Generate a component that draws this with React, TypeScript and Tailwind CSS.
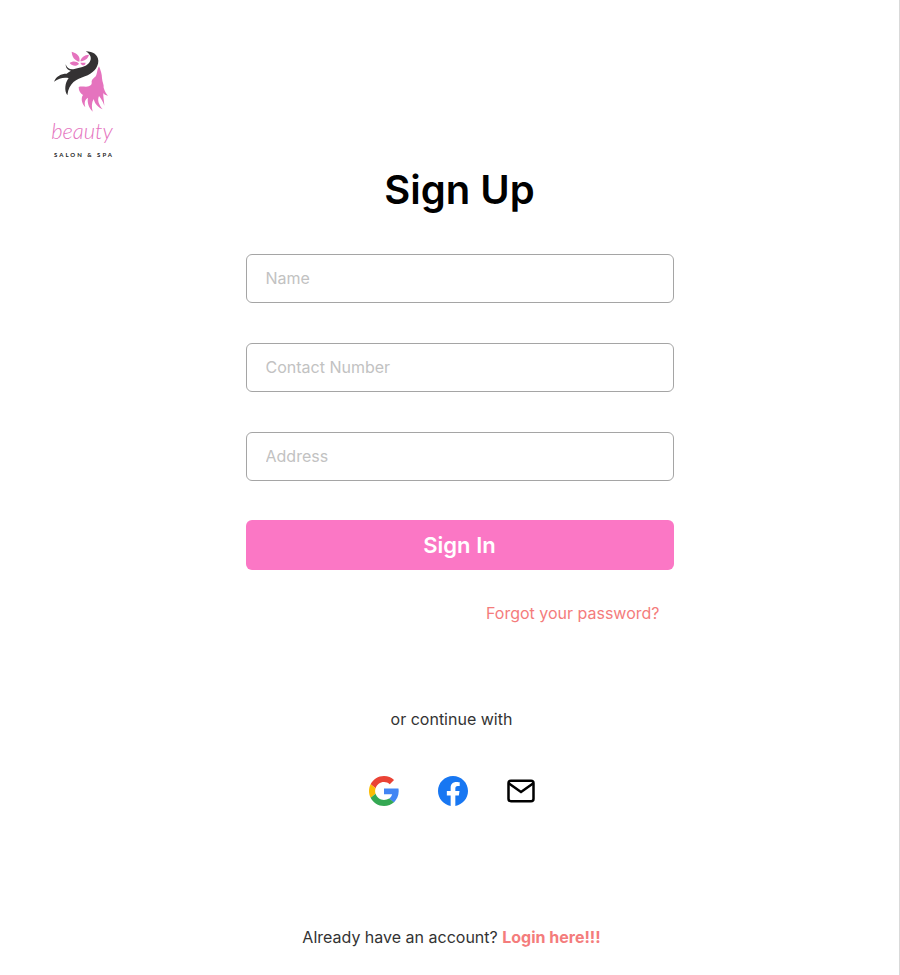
import React from "react";

function Logo() {
  return (
    <div className="flex w-19 flex-col items-center">
      <svg viewBox="0 0 225 210" className="h-[70px] w-[75px]" aria-hidden="true">
        <path
          fill="#343233"
          d="M122 19 C145 19 159 30 160 47 C160 69 143 85 120 94 C94 104 72 112 67 151 C57 136 60 114 71 99 C56 96 42 99 27 110 C34 93 48 86 65 86 C75 77 84 74 98 76 C78 82 62 76 62 58 C66 70 76 75 88 72 C104 68 122 66 132 54 C143 40 136 27 122 19Z"
        />
        <path
          fill="#e573be"
          d="M162 64 C167 76 171 88 171 100 C172 112 177 118 176 128 C179 139 184 147 189 152 C182 151 177 148 175 144 C174 154 177 165 178 182 C174 170 168 160 162 153 C156 166 162 180 173 193 C158 187 149 175 146 162 C140 172 139 185 143 200 C131 187 126 172 129 158 C120 163 117 171 121 187 C110 175 107 160 114 150 C107 146 101 139 101 126 C107 123 115 125 123 125 C136 124 141 120 140 112 C139 104 147 99 152 94 C157 87 155 76 162 64Z"
        />
        <path
          fill="#e573be"
          d="M80 20 C97 25 107 35 103 50 C88 46 81 35 80 20Z M132 29 C129 42 118 48 106 49 C108 37 118 30 132 29Z M74 54 C84 46 96 49 102 56 C95 65 82 64 74 54Z M106 53 L122 53 C120 63 111 64 106 53Z"
        />
      </svg>
      <span className="font-['Lato',sans-serif] text-[22px] leading-8 font-light text-[#e573be] italic">
        beauty
      </span>
      <span className="-mr-1 font-['Lato',sans-serif] text-[6px] leading-4 font-bold tracking-[2px] whitespace-nowrap text-[#222222]">
        SALON &amp; SPA
      </span>
    </div>
  );
}

function Field({ id, label }: { id: string; label: string }) {
  return (
    <input
      id={id}
      name={id}
      type="text"
      aria-label={label}
      placeholder={label}
      className="h-[49px] w-full rounded-md border border-[#a5a5a5] bg-white px-[19px] pb-0.5 text-base text-gray-800 placeholder:text-[#c2c2c2]"
    />
  );
}

function GoogleIcon() {
  return (
    <svg viewBox="0 0 48 48" className="size-[30px]" aria-hidden="true">
      <path fill="#EA4335" d="M24 9.5c3.54 0 6.71 1.22 9.21 3.6l6.85-6.85C35.9 2.38 30.47 0 24 0 14.62 0 6.51 5.38 2.56 13.22l7.98 6.19C12.43 13.72 17.74 9.5 24 9.5z" />
      <path fill="#4285F4" d="M47.5 24.55c0-1.57-.15-3.09-.38-4.55H24v9.02h12.94c-.58 2.96-2.26 5.48-4.78 7.18l7.73 6c4.51-4.18 7.61-10.36 7.61-17.65z" />
      <path fill="#FBBC05" d="M10.53 28.59c-.48-1.45-.76-2.99-.76-4.59s.27-3.14.76-4.59l-7.98-6.19C.92 16.46 0 20.12 0 24c0 3.88.92 7.54 2.56 10.78l7.97-6.19z" />
      <path fill="#34A853" d="M24 48c6.48 0 11.93-2.13 15.89-5.81l-7.73-6c-2.15 1.45-4.92 2.3-8.16 2.3-6.26 0-11.57-4.22-13.47-9.91l-7.98 6.19C6.51 42.62 14.62 48 24 48z" />
    </svg>
  );
}

function FacebookIcon() {
  return (
    <svg viewBox="0 0 24 24" className="size-[30px]" aria-hidden="true">
      <path
        fill="#1877F2"
        d="M24 12.073c0-6.627-5.373-12-12-12s-12 5.373-12 12c0 5.99 4.388 10.954 10.125 11.854v-8.385H7.078v-3.47h3.047V9.43c0-3.007 1.792-4.669 4.533-4.669 1.312 0 2.686.235 2.686.235v2.953H15.83c-1.491 0-1.956.925-1.956 1.874v2.25h3.328l-.532 3.47h-2.796v8.385C19.612 23.027 24 18.062 24 12.073z"
      />
    </svg>
  );
}

function MailIcon() {
  return (
    <svg viewBox="0 0 28 24" className="h-6 w-7" fill="none" stroke="#000" strokeWidth="2.5" aria-hidden="true">
      <rect x="1.5" y="1.75" width="25" height="20.5" rx="2.5" />
      <path d="M2 4.5 14 13 26 4.5" />
    </svg>
  );
}

export default function App() {
  return (
    <div className="min-h-screen border-r border-[#d9d9d9] bg-white pb-6 font-['Inter',sans-serif] text-[#333333]">
      <header className="px-11 pt-[45px]">
        <Logo />
      </header>

      <main>
        <div className="pl-5">
          <form className="mx-auto flex w-full max-w-[428px] flex-col" onSubmit={(e) => e.preventDefault()}>
            <h1 className="mt-px text-center text-[40px] leading-[52px] font-semibold text-black">Sign Up</h1>
            <div className="mt-[38px] flex flex-col gap-10">
              <Field id="name" label="Name" />
              <Field id="contact" label="Contact Number" />
              <Field id="address" label="Address" />
            </div>
            <button type="submit" className="mt-[39px] h-[50px] rounded-md bg-[#fb77c5] text-[22px] font-semibold text-white">
              Sign In
            </button>
            <a href="#forgot" className="mt-[31px] mr-3.5 self-end text-base leading-6 text-[#f47c7c]">
              Forgot your password?
            </a>
          </form>
        </div>

        <section className="mt-[82px] flex flex-col items-center pl-1">
          <p className="text-base leading-6">or continue with</p>
          <div className="mt-[45px] flex items-center">
            <button type="button" aria-label="Continue with Google"><GoogleIcon /></button>
            <button type="button" aria-label="Continue with Facebook" className="mx-[39px]"><FacebookIcon /></button>
            <button type="button" aria-label="Continue with email"><MailIcon /></button>
          </div>
          <p className="mt-[119px] text-base leading-6">
            Already have an account?{" "}
            <a href="#login" className="font-bold text-[#f47c7c]">Login here!!!</a>
          </p>
        </section>
      </main>
    </div>
  );
}
